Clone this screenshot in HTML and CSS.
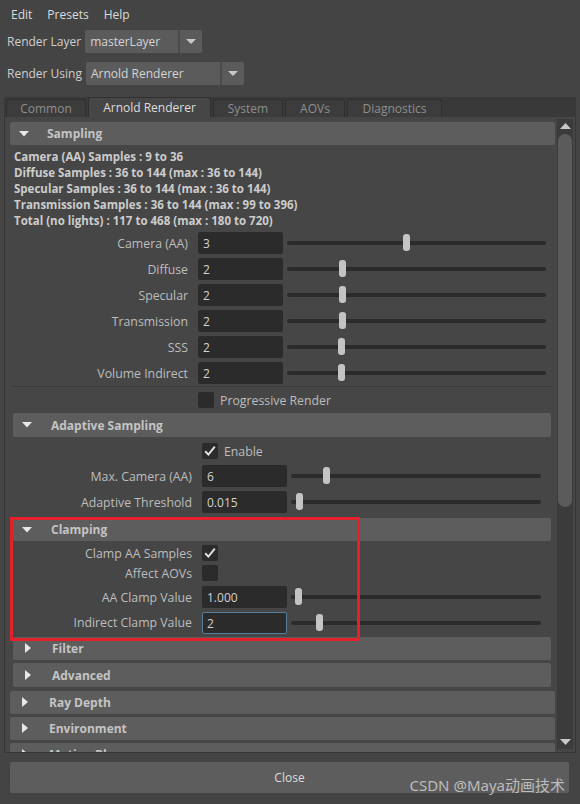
FILE: index.html
```html
<!DOCTYPE html>
<html>
<head>
<meta charset="utf-8">
<link rel="stylesheet" href="styles.css">
</head>
<body>
<div class="win">
  <div class="menubar"><span>Edit</span><span>Presets</span><span>Help</span></div>

  <div class="optrow r1">
    <span class="optlabel">Render Layer</span>
    <div class="combo c1"><span class="ctext">masterLayer</span><span class="carrow"><svg width="10" height="6" viewBox="0 0 10 6"><polygon points="0,0 10,0 5,5" fill="#c8c8c8"/></svg></span></div>
  </div>
  <div class="optrow r2">
    <span class="optlabel">Render Using</span>
    <div class="combo c2"><span class="ctext">Arnold Renderer</span><span class="carrow"><svg width="10" height="6" viewBox="0 0 10 6"><polygon points="0,0 10,0 5,5" fill="#c8c8c8"/></svg></span></div>
  </div>

  <div class="tabs">
    <div class="tab tw-common">Common</div>
    <div class="tab active tw-arnold">Arnold Renderer</div>
    <div class="tab tw-system">System</div>
    <div class="tab tw-aovs">AOVs</div>
    <div class="tab tw-diag">Diagnostics</div>
  </div>

  <div class="panel">
    <div class="scroll">
      <div class="frame top">
        <div class="fhead"><span class="tri"><svg width="10" height="6" viewBox="0 0 10 6"><polygon points="0,0 10,0 5,5.5" fill="#e8e8e8"/></svg></span><span class="ftitle">Sampling</span></div>
        <div class="fbody">
          <div class="info">
            <div>Camera (AA) Samples : 9 to 36</div>
            <div>Diffuse Samples : 36 to 144 (max : 36 to 144)</div>
            <div>Specular Samples : 36 to 144 (max : 36 to 144)</div>
            <div>Transmission Samples : 36 to 144 (max : 99 to 396)</div>
            <div>Total (no lights) : 117 to 468 (max : 180 to 720)</div>
          </div>
          <div class="rows">
            <div class="prow"><span class="plabel">Camera (AA)</span><span class="field">3</span><div class="slider"><div class="track"></div><div class="thumb" style="left:46%"></div></div></div>
            <div class="prow"><span class="plabel">Diffuse</span><span class="field">2</span><div class="slider"><div class="track"></div><div class="thumb" style="left:21.3%"></div></div></div>
            <div class="prow"><span class="plabel">Specular</span><span class="field">2</span><div class="slider"><div class="track"></div><div class="thumb" style="left:21.3%"></div></div></div>
            <div class="prow"><span class="plabel">Transmission</span><span class="field">2</span><div class="slider"><div class="track"></div><div class="thumb" style="left:21.3%"></div></div></div>
            <div class="prow"><span class="plabel">SSS</span><span class="field">2</span><div class="slider"><div class="track"></div><div class="thumb" style="left:20.9%"></div></div></div>
            <div class="prow"><span class="plabel">Volume Indirect</span><span class="field">2</span><div class="slider"><div class="track"></div><div class="thumb" style="left:20.9%"></div></div></div>
          </div>
          <div class="sep"></div>
          <div class="crow prog"><span class="plabel"></span><span class="cbox"></span><span class="clabel">Progressive Render</span></div>

          <div class="frame sub adaptive">
            <div class="fhead"><span class="tri"><svg width="10" height="6" viewBox="0 0 10 6"><polygon points="0,0 10,0 5,5.5" fill="#e8e8e8"/></svg></span><span class="ftitle">Adaptive Sampling</span></div>
            <div class="fbody">
              <div class="crow first"><span class="plabel"></span><span class="cbox"><svg width="16" height="16" viewBox="0 0 16 16"><path d="M3.2 8.2 L6.4 11.6 L12.8 3.6" fill="none" stroke="#e2e2e2" stroke-width="2"/></svg></span><span class="clabel">Enable</span></div>
              <div class="prow gap2"><span class="plabel">Max. Camera (AA)</span><span class="field">6</span><div class="slider"><div class="track"></div><div class="thumb" style="left:14%"></div></div></div>
              <div class="prow"><span class="plabel">Adaptive Threshold</span><span class="field">0.015</span><div class="slider"><div class="track"></div><div class="thumb" style="left:3.2%"></div></div></div>
            </div>
          </div>

          <div class="frame sub clamping">
            <div class="fhead"><span class="tri"><svg width="10" height="6" viewBox="0 0 10 6"><polygon points="0,0 10,0 5,5.5" fill="#e8e8e8"/></svg></span><span class="ftitle">Clamping</span></div>
            <div class="fbody">
              <div class="crow first"><span class="plabel">Clamp AA Samples</span><span class="cbox"><svg width="16" height="16" viewBox="0 0 16 16"><path d="M3.2 8.2 L6.4 11.6 L12.8 3.6" fill="none" stroke="#e2e2e2" stroke-width="2"/></svg></span></div>
              <div class="crow"><span class="plabel">Affect AOVs</span><span class="cbox"></span></div>
              <div class="prow gap1"><span class="plabel">AA Clamp Value</span><span class="field">1.000</span><div class="slider"><div class="track"></div><div class="thumb" style="left:2.8%"></div></div></div>
              <div class="prow last"><span class="plabel">Indirect Clamp Value</span><span class="field focus">2</span><div class="slider"><div class="track"></div><div class="thumb" style="left:11.2%"></div></div></div>
            </div>
          </div>

          <div class="frame sub closed filter">
            <div class="fhead"><span class="tri"><svg width="7" height="11" viewBox="0 0 7 11"><polygon points="0,0 6,5 0,10" fill="#e8e8e8"/></svg></span><span class="ftitle">Filter</span></div>
          </div>
          <div class="frame sub closed advanced">
            <div class="fhead"><span class="tri"><svg width="7" height="11" viewBox="0 0 7 11"><polygon points="0,0 6,5 0,10" fill="#e8e8e8"/></svg></span><span class="ftitle">Advanced</span></div>
          </div>
        </div>
      </div>

      <div class="frame top closed raydepth">
        <div class="fhead"><span class="tri"><svg width="7" height="11" viewBox="0 0 7 11"><polygon points="0,0 6,5 0,10" fill="#e8e8e8"/></svg></span><span class="ftitle">Ray Depth</span></div>
      </div>
      <div class="frame top closed">
        <div class="fhead"><span class="tri"><svg width="7" height="11" viewBox="0 0 7 11"><polygon points="0,0 6,5 0,10" fill="#e8e8e8"/></svg></span><span class="ftitle">Environment</span></div>
      </div>
      <div class="frame top closed">
        <div class="fhead"><span class="tri"><svg width="7" height="11" viewBox="0 0 7 11"><polygon points="0,0 6,5 0,10" fill="#e8e8e8"/></svg></span><span class="ftitle">Motion Blur</span></div>
      </div>
    </div>

    <div class="vbar">
      <div class="varrow"><svg width="11" height="6" viewBox="0 0 11 6"><polygon points="0,6 11,6 5.5,0" fill="#c8c8c8"/></svg></div>
      <div class="vthumb"></div>
      <div class="vspace"></div>
      <div class="varrow bottom"><svg width="11" height="6" viewBox="0 0 11 6"><polygon points="0,0 11,0 5.5,6" fill="#c8c8c8"/></svg></div>
    </div>
  </div>

  <div class="closebar"><div class="closebtn">Close</div></div>

  <div class="redbox"></div>
  <div class="watermark">CSDN @Maya动画技术</div>
</div>
</body>
</html>
```

FILE: styles.css
```css
* { box-sizing: border-box; }
html, body { margin: 0; padding: 0; background: #444444; }
body { font-family: "Open Sans", "Noto Sans", sans-serif; font-size: 12px; color: #bbbbbb; }

.win { position: relative; width: 580px; height: 804px; overflow: hidden; background: #444444; }

.menubar { height: 28px; display: flex; align-items: center; padding-left: 11px; gap: 15px; color: #dcdcdc; }

.optrow { display: flex; align-items: center; height: 23px; padding-left: 7px; gap: 4px; }
.r1 { margin-top: 2px; }
.r2 { margin-top: 9px; }
.optlabel { color: #cfcfcf; }
.combo { display: flex; height: 23px; background: #5b5b5b; border-radius: 2px; }
.c1 { width: 117px; }
.c2 { width: 158px; }
.ctext { flex: 1; padding-left: 5px; line-height: 24px; color: #d4d4d4; }
.carrow { width: 24px; border-left: 2px solid #4a4a4a; display: flex; align-items: center; justify-content: center; }

.tabs { margin-top: 12px; margin-left: 4px; width: 572px; height: 20px; background: #393939; display: flex; align-items: flex-end; gap: 2px; padding-left: 2px; }
.tab { height: 18px; background: #3c3c3c; border: 1px solid #303030; border-bottom: none; border-radius: 3px 3px 0 0; color: #8e8e8e; text-align: center; line-height: 18px; }
.tab.active { height: 20px; background: #464646; color: #dedede; line-height: 20px; }
.tw-common { width: 80px; }
.tw-arnold { width: 123px; }
.tw-system { width: 70px; }
.tw-aovs { width: 60px; }
.tw-diag { width: 95px; }

.panel { margin-left: 4px; width: 572px; height: 636px; background: #464646; border: 1px solid #363636; border-top: none; display: flex; }
.scroll { flex: 1; overflow: hidden; padding: 5px 1px 0 5px; }

.frame { display: block; }
.fhead { height: 23px; background: #5d5d5d; border-radius: 2px; display: flex; align-items: center; }
.frame.top > .fhead .tri { margin-left: 9px; }
.frame.top > .fhead .ftitle { margin-left: 18px; }
.tri { display: flex; width: 10px; align-items: center; }
.ftitle { font-weight: 700; color: #c4c4c4; font-size: 12px; }
.frame.top.closed { margin-top: 3px; }
.frame.top.closed.raydepth { margin-top: 4px; }
.frame.top.closed > .fhead .tri { margin-left: 12px; width: 7px; }
.frame.top.closed > .fhead .ftitle { margin-left: 20px; }

.info { padding: 4px 0 0 4px; font-weight: 700; font-size: 11.5px; line-height: 16px; color: #cccccc; }
.rows { margin-top: 1px; }

.prow { display: flex; align-items: center; height: 26px; }
.plabel { width: 178px; text-align: right; color: #bdbdbd; flex: none; font-size: 12.3px; }
.field { margin-left: 10px; width: 85px; height: 22px; background: #2b2b2b; border-radius: 2px; color: #d2d2d2; flex: none; border: 1px solid #2b2b2b; padding-left: 4px; line-height: 21px; }
.field.focus { border-color: #54809e; }
.slider { position: relative; flex: 1; height: 26px; margin-left: 4px; margin-right: 9px; }
.track { position: absolute; left: 0; right: 0; top: 11px; height: 4px; background: #2b2b2b; border-radius: 2px; }
.thumb { position: absolute; top: 4px; width: 7px; height: 17px; margin-left: -3px; background: #c4c4c4; border-radius: 3px; }

.sep { height: 1px; background: #3b3b3b; margin: 0 2px; }
.crow { display: flex; align-items: center; height: 20px; }
.crow.prog { margin-top: 3px; }
.cbox { margin-left: 10px; width: 16px; height: 16px; background: #2b2b2b; border-radius: 2px; flex: none; display: flex; }
.clabel { margin-left: 6px; color: #bdbdbd; font-size: 12.3px; }

.frame.sub { margin: 3px 4px 0 3px; }
.frame.sub > .fhead { height: 24px; }
.frame.sub > .fhead .tri { margin-left: 9px; }
.frame.sub > .fhead .ftitle { margin-left: 19px; }
.frame.sub .plabel { width: 179px; }
.frame.sub .slider { margin-right: 10px; }
.frame.sub .crow.first { margin-top: 4px; }
.frame.sub .prow.gap2 { margin-top: 2px; }
.frame.sub .prow.gap1 { margin-top: 1px; }
.frame.clamping { margin-top: 3px; }
.frame.clamping > .fhead { height: 23px; }
.frame.clamping .crow.first { margin-top: 2px; }
.frame.clamping .prow.last { height: 25px; }
.frame.sub.closed > .fhead .tri { margin-left: 12px; width: 7px; }
.frame.sub.closed > .fhead .ftitle { margin-left: 20px; }
.frame.sub.filter { margin-top: 2px; }
.frame.sub.filter > .fhead { height: 23px; }
.frame.sub.advanced { margin-top: 3px; }
.frame.sub.advanced > .fhead { height: 24px; }

.vbar { width: 16px; margin: 2px 2px 3px 1px; background: #3b3b3b; display: flex; flex-direction: column; align-items: center; }
.varrow { height: 14px; display: flex; align-items: center; justify-content: center; width: 100%; }
.vthumb { width: 14px; height: 373px; margin-top: 1px; background: #5b5b5b; border-radius: 7px; }
.vspace { flex: 1; }
.varrow.bottom { height: 14px; }

.closebar { padding: 9px 0 0 10px; }
.closebtn { width: 559px; height: 31px; background: #5d5d5d; border-radius: 2px; text-align: center; line-height: 32px; color: #dcdcdc; }

.redbox { position: absolute; left: 10px; top: 517px; width: 350px; height: 124px; border: 3px solid #e4202a; }
.watermark { position: absolute; right: 15px; top: 775px; font-family: "Noto Sans", "Noto Sans CJK SC", sans-serif; font-size: 15px; color: rgba(225, 225, 225, 0.72); line-height: 20px; }
```
